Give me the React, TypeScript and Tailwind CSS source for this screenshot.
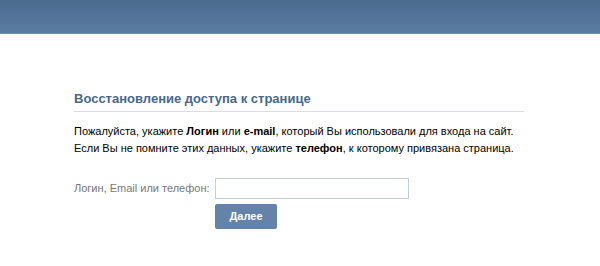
import React from "react";

const App = () => {
  return (
    <div className="w-[600px] h-[266px] bg-white font-['Liberation_Sans',Arial,sans-serif] overflow-hidden">
      <div className="h-[34px] bg-gradient-to-b from-[#4a6a8e] to-[#5b7ca1] border-b border-[#6f8db0]" />
      <div className="pl-[74px] pt-[57px] w-[524px]">
        <div className="border-b border-[#dadee3] pb-[4px]">
          <h1 className="text-[13px] font-bold text-[#45688e] leading-[16px] whitespace-nowrap">Восстановление доступа к странице</h1>
        </div>
        <div className="pt-[11px] text-[11px] leading-[17px] text-[#000] whitespace-nowrap">
          <p>
            Пожалуйста, укажите <b>Логин</b> или <b>e-mail</b>, который Вы использовали для входа на сайт.
          </p>
          <p>
            Если Вы не помните этих данных, укажите <b>телефон</b>, к которому привязана страница.
          </p>
        </div>
        <div className="pt-[21px] flex items-center">
          <label className="w-[141px] shrink-0 text-[11px] text-[#777] text-right pr-[10px] whitespace-nowrap">Логин, Email или телефон:</label>
          <input className="w-[194px] h-[21px] border border-[#c5ced8] bg-white outline-none px-[3px] text-[11px]" />
        </div>
        <div className="pl-[141px] pt-[4px]">
          <button className="w-[62px] h-[25px] bg-[#6383a8] rounded-[2px] text-white text-[11px] font-bold">Далее</button>
        </div>
      </div>
    </div>
  );
};

export default App;
